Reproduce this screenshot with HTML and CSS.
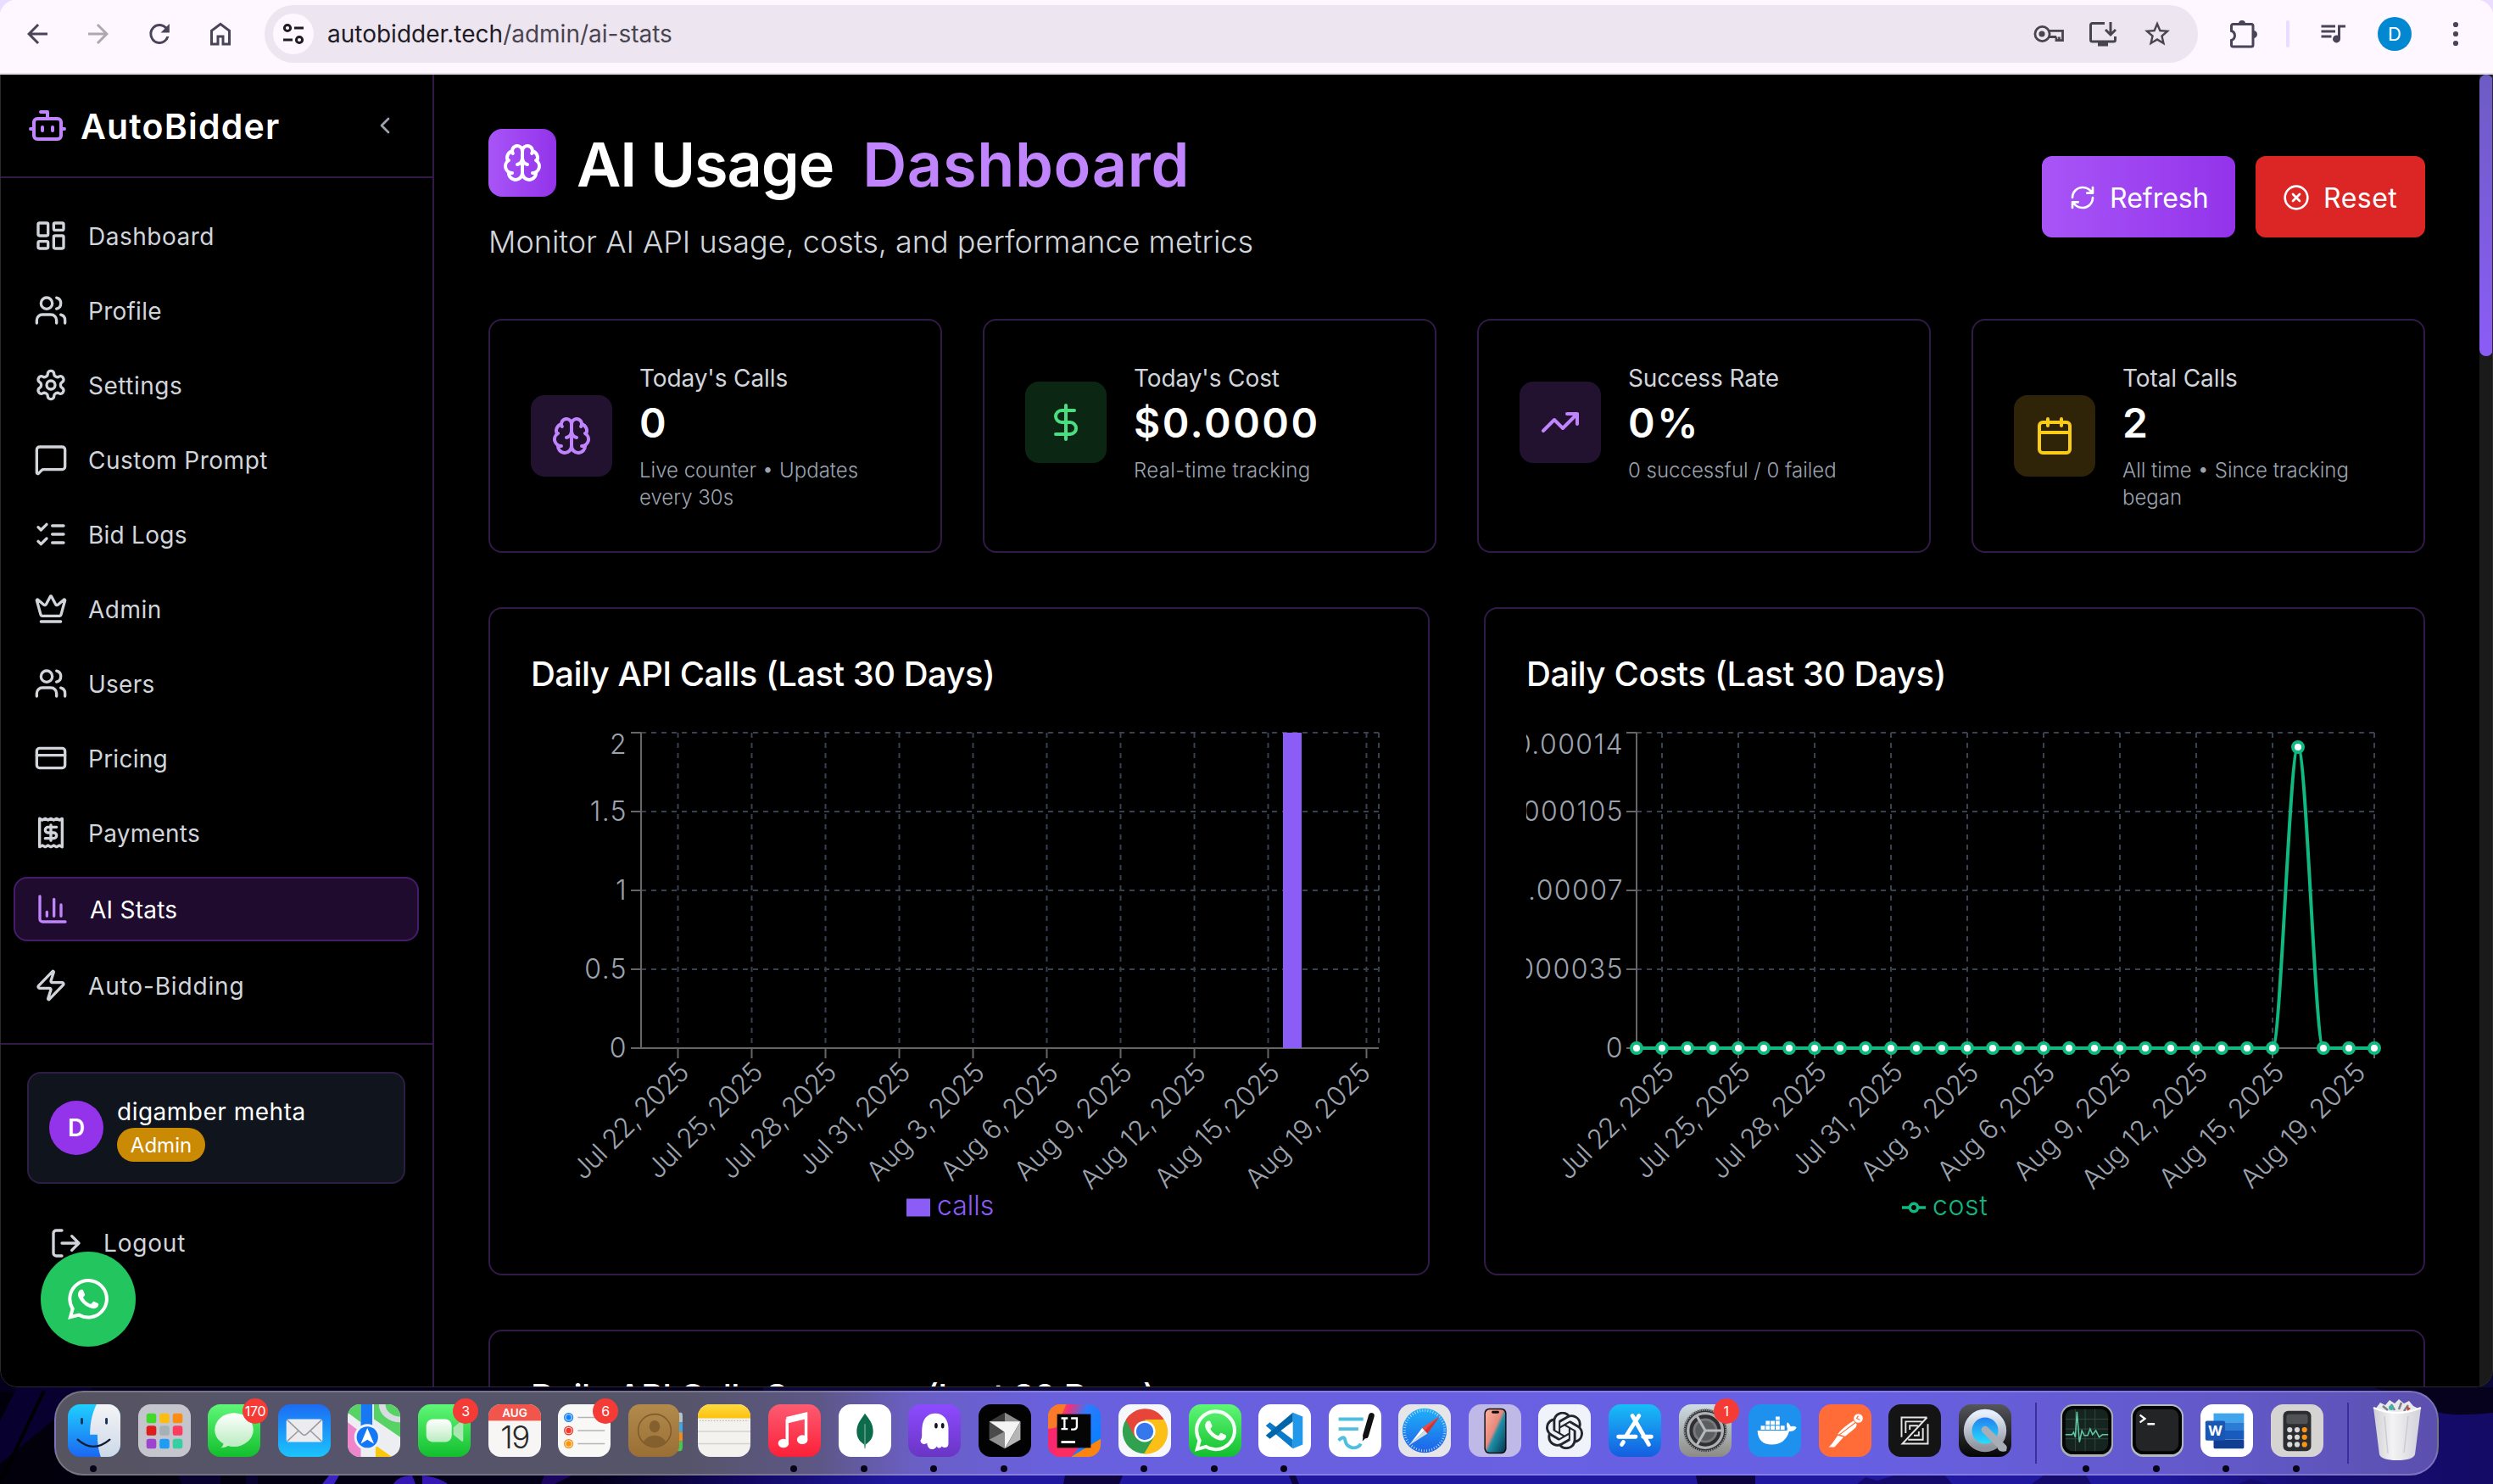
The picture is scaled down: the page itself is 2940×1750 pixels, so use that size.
FILE: index.html
```html
<!DOCTYPE html>
<html lang="en">
<head>
<meta charset="utf-8">
<title>AI Usage Dashboard</title>
<link rel="stylesheet" href="styles.css">
</head>
<body>
<svg width="0" height="0" class="defs">
  <defs>
    <symbol id="brain" viewBox="0 0 24 24"><path d="M12 18V5M15 13a4.17 4.17 0 0 1-3-4 4.17 4.17 0 0 1-3 4M17.598 6.5A3 3 0 1 0 12 5a3 3 0 1 0-5.598 1.5M17.997 5.125a4 4 0 0 1 2.526 5.77M18 18a4 4 0 0 0 2-7.464M19.967 17.483A4 4 0 1 1 12 18a4 4 0 1 1-7.967-.517M6 18a4 4 0 0 1-2-7.464M6.003 5.125a4 4 0 0 0-2.526 5.77"/></symbol>
    <symbol id="users" viewBox="0 0 24 24"><path d="M16 21v-2a4 4 0 0 0-4-4H6a4 4 0 0 0-4 4v2M22 21v-2a4 4 0 0 0-3-3.87M16 3.13a4 4 0 0 1 0 7.75"/><circle cx="9" cy="7" r="4"/></symbol>
    <symbol id="whatsapp" viewBox="0 0 24 24"><path d="M17.472 14.382c-.297-.149-1.758-.867-2.03-.967-.273-.099-.471-.148-.67.15-.197.297-.767.966-.94 1.164-.173.199-.347.223-.644.075-.297-.15-1.255-.463-2.39-1.475-.883-.788-1.48-1.761-1.653-2.059-.173-.297-.018-.458.13-.606.134-.133.298-.347.446-.52.149-.174.198-.298.298-.497.099-.198.05-.371-.025-.52-.075-.149-.669-1.612-.916-2.207-.242-.579-.487-.5-.669-.51-.173-.008-.371-.01-.57-.01-.198 0-.52.074-.792.372-.272.297-1.04 1.016-1.04 2.479 0 1.462 1.065 2.875 1.213 3.074.149.198 2.096 3.2 5.077 4.487.709.306 1.262.489 1.694.625.712.227 1.36.195 1.871.118.571-.085 1.758-.719 2.006-1.413.248-.694.248-1.289.173-1.413-.074-.124-.272-.198-.57-.347m-5.421 7.403h-.004a9.87 9.87 0 01-5.031-1.378l-.361-.214-3.741.982.998-3.648-.235-.374a9.86 9.86 0 01-1.51-5.26c.001-5.45 4.436-9.884 9.888-9.884 2.64 0 5.122 1.03 6.988 2.898a9.825 9.825 0 012.893 6.994c-.003 5.45-4.437 9.884-9.885 9.884m8.413-18.297A11.815 11.815 0 0012.05 0C5.495 0 .16 5.335.157 11.892c0 2.096.547 4.142 1.588 5.945L.057 24l6.305-1.654a11.882 11.882 0 005.683 1.448h.005c6.554 0 11.89-5.335 11.893-11.893a11.821 11.821 0 00-3.48-8.413z"/></symbol>
    <linearGradient id="g-green" x1="0" y1="0" x2="0" y2="1"><stop offset="0" stop-color="#5ff777"/><stop offset="1" stop-color="#12bf2d"/></linearGradient>
    <linearGradient id="g-white" x1="0" y1="0" x2="0" y2="1"><stop offset="0" stop-color="#fff"/><stop offset="1" stop-color="#b9ecc0"/></linearGradient>
    <linearGradient id="g-mail" x1="0" y1="0" x2="0" y2="1"><stop offset="0" stop-color="#1c6cf3"/><stop offset="1" stop-color="#1cc4fd"/></linearGradient>
    <linearGradient id="g-finder" x1="0" y1="0" x2="0" y2="1"><stop offset="0" stop-color="#1fd0ff"/><stop offset="1" stop-color="#1c67f2"/></linearGradient>
    <linearGradient id="g-face" x1="0" y1="0" x2="0" y2="1"><stop offset="0" stop-color="#f4f4f6"/><stop offset="1" stop-color="#cdd9e8"/></linearGradient>
    <linearGradient id="g-music" x1="0" y1="0" x2="0" y2="1"><stop offset="0" stop-color="#fc5c72"/><stop offset="1" stop-color="#fb2038"/></linearGradient>
    <linearGradient id="g-ghost" x1="0" y1="0" x2="0" y2="1"><stop offset="0" stop-color="#8d4bff"/><stop offset="1" stop-color="#6a35c4"/></linearGradient>
    <linearGradient id="g-idea" x1="0" y1=".2" x2="1" y2=".6"><stop offset="0" stop-color="#ff7a1c"/><stop offset=".3" stop-color="#f0307a"/><stop offset=".6" stop-color="#2d7bff"/><stop offset="1" stop-color="#0a80ff"/></linearGradient>
    <linearGradient id="g-store" x1="0" y1="0" x2="0" y2="1"><stop offset="0" stop-color="#19bdf8"/><stop offset="1" stop-color="#145de0"/></linearGradient>
    <linearGradient id="g-sys" x1="0" y1="0" x2="0" y2="1"><stop offset="0" stop-color="#cfdde4"/><stop offset="1" stop-color="#8c8a86"/></linearGradient>
    <linearGradient id="g-qt" x1="0" y1="0" x2="0" y2="1"><stop offset="0" stop-color="#55565c"/><stop offset="1" stop-color="#050506"/></linearGradient>
    <linearGradient id="g-steel" x1="0" y1="0" x2="0" y2="1"><stop offset="0" stop-color="#e6effc"/><stop offset="1" stop-color="#8e939c"/></linearGradient>
    <linearGradient id="g-qtc" x1="0" y1="0" x2="0" y2="1"><stop offset="0" stop-color="#2272ee"/><stop offset="1" stop-color="#27edff"/></linearGradient>
    <linearGradient id="g-saf" x1="0" y1="0" x2="0" y2="1"><stop offset="0" stop-color="#1fb0fa"/><stop offset="1" stop-color="#1d62e6"/></linearGradient>
    <linearGradient id="g-tan" x1="0" y1="0" x2="0" y2="1"><stop offset="0" stop-color="#b28a4c"/><stop offset="1" stop-color="#9a6f36"/></linearGradient>
    <linearGradient id="g-note" x1="0" y1="0" x2="0" y2="1"><stop offset="0" stop-color="#fedb45"/><stop offset="1" stop-color="#fcc10c"/></linearGradient>
    <linearGradient id="g-trash" x1="0" y1="0" x2="1" y2="0"><stop offset="0" stop-color="#cfcfd4"/><stop offset=".4" stop-color="#f3f3f4"/><stop offset="1" stop-color="#d2d0da"/></linearGradient>
    <linearGradient id="g-phone" x1="0" y1="0" x2="1" y2="1"><stop offset="0" stop-color="#ffb09c"/><stop offset=".45" stop-color="#e6897c"/><stop offset=".55" stop-color="#1e8fa8"/><stop offset="1" stop-color="#04364f"/></linearGradient>
    <clipPath id="tile"><rect width="64" height="64" rx="15"/></clipPath>
  </defs>
</svg>

<header class="toolbar">
  <nav class="toolbar-nav">
    <svg class="tb" viewBox="0 0 24 24"><path d="M20 11H7.83l5.59-5.59L12 4l-8 8 8 8 1.41-1.41L7.83 13H20z"/></svg>
    <svg class="tb dim" viewBox="0 0 24 24"><path d="M4 11h12.17l-5.58-5.59L12 4l8 8-8 8-1.41-1.41L16.17 13H4z"/></svg>
    <svg class="tb" viewBox="0 0 24 24"><path d="M17.65 6.35A7.958 7.958 0 0 0 12 4a8 8 0 1 0 7.73 10h-2.08A6 6 0 1 1 12 6c1.66 0 3.14.69 4.22 1.78L13 11h7V4z" transform="matrix(.98 0 0 1 .3 0)"/></svg>
    <svg class="tb" viewBox="0 0 24 24"><path d="M6 19h3v-6h6v6h3v-9l-6-4.5L6 10zm-2 2V9l8-6 8 6v12h-7v-6h-2v6z"/></svg>
  </nav>
  <div class="omnibox">
    <span class="site-info"><svg width="28" height="28" viewBox="0 0 28 28" fill="none" stroke="#1f1b24" stroke-width="3"><circle cx="7" cy="7" r="3.6"/><path d="M15 7h11M2 21h11"/><circle cx="21" cy="21" r="3.6"/></svg></span>
    <span class="url">autobidder.tech<span class="path">/admin/ai-stats</span></span>
    <span class="omni-icons">
      <svg width="36" height="24" viewBox="0 0 36 24" fill="none" stroke="#49454f" stroke-width="2.8"><circle cx="10.5" cy="12" r="8.6"/><circle cx="10" cy="12" r="3.6" fill="#49454f" stroke="none"/><path d="M18 8.4h16.5v11.2h-4V15.5M27 15.5v4h4M18.5 15.5H27"/></svg>
      <svg width="34" height="32" viewBox="0 0 34 32" fill="none" stroke="#49454f" stroke-width="3"><path d="M19 3.500H4.500a2 2 0 0 0-2 2V23a2 2 0 0 0 2 2h25a2 2 0 0 0 2-2v-4M26 2v14M20 11l6 6 6-6"/><path d="M11 28h12" stroke-width="5"/></svg>
      <svg width="36" height="36" viewBox="0 0 24 24" fill="#49454f"><path d="M22 9.240l-7.190-.62L12 2 9.190 8.630 2 9.240l5.460 4.730L5.820 21 12 17.270 18.180 21l-1.630-7.030zM12 15.400l-3.760 2.270 1-4.280-3.320-2.880 4.380-.38L12 6.100l1.710 4.040 4.380.38-3.320 2.880 1 4.280z"/></svg>
    </span>
  </div>
  <div class="toolbar-end">
    <svg width="36" height="36" viewBox="0 0 36 36" fill="none" stroke="#4a4458" stroke-width="3"><path d="M3.500 8.500a2 2 0 0 1 2-2H27a2 2 0 0 1 2 2V31a2 2 0 0 1-2 2H5.500a2 2 0 0 1-2-2v-5.500a5.800 5.800 0 0 0 0-11z"/><path d="M12 6a4 4 0 0 1 8 0zM29.500 14a4.500 4.500 0 0 1 0 9z" fill="#4a4458" stroke="none"/></svg>
    <i class="tb-sep"></i>
    <svg width="36" height="36" viewBox="0 0 24 24" fill="#4a4458"><path d="M14 5H3v2h11zm0 4H3v2h11zM3 15h8v-2H3zM16 5v8.180A3 3 0 1 0 18 16V7h4V5z"/></svg>
    <span class="profile">D</span>
    <svg width="12" height="36" viewBox="0 0 12 36" fill="#4a4458"><circle cx="6" cy="7" r="3.100"/><circle cx="6" cy="18" r="3.100"/><circle cx="6" cy="29" r="3.100"/></svg>
  </div>
</header>

<div class="window">
  <aside class="sidebar">
    <div class="brand">
      <svg class="ic s48 violet" viewBox="0 0 24 24"><path d="M12 8V4H8M2 14h2M20 14h2M15 13v2M9 13v2"/><rect width="16" height="12" x="4" y="8" rx="2"/></svg>
      <span class="brand-name">AutoBidder</span>
      <svg class="ic s32 collapse" viewBox="0 0 24 24"><path d="m15 18-6-6 6-6"/></svg>
    </div>
    <nav class="menu">
      <a class="item"><svg class="ic s40" viewBox="0 0 24 24"><rect width="7" height="9" x="3" y="3" rx="1"/><rect width="7" height="5" x="14" y="3" rx="1"/><rect width="7" height="9" x="14" y="12" rx="1"/><rect width="7" height="5" x="3" y="16" rx="1"/></svg>Dashboard</a>
      <a class="item snug"><svg class="ic s40"><use href="#users"/></svg>Profile</a>
      <a class="item"><svg class="ic s40" viewBox="0 0 24 24"><path d="M12.220 2h-.44a2 2 0 0 0-2 2v.18a2 2 0 0 1-1 1.730l-.43.25a2 2 0 0 1-2 0l-.15-.08a2 2 0 0 0-2.730.73l-.22.38a2 2 0 0 0 .73 2.730l.15.1a2 2 0 0 1 1 1.720v.51a2 2 0 0 1-1 1.740l-.15.09a2 2 0 0 0-.73 2.730l.22.38a2 2 0 0 0 2.730.73l.15-.08a2 2 0 0 1 2 0l.43.25a2 2 0 0 1 1 1.730V20a2 2 0 0 0 2 2h.44a2 2 0 0 0 2-2v-.18a2 2 0 0 1 1-1.730l.43-.25a2 2 0 0 1 2 0l.15.08a2 2 0 0 0 2.730-.73l.22-.39a2 2 0 0 0-.73-2.730l-.15-.08a2 2 0 0 1-1-1.740v-.5a2 2 0 0 1 1-1.740l.15-.09a2 2 0 0 0 .73-2.730l-.22-.38a2 2 0 0 0-2.730-.73l-.15.08a2 2 0 0 1-2 0l-.43-.25a2 2 0 0 1-1-1.730V4a2 2 0 0 0-2-2z"/><circle cx="12" cy="12" r="3"/></svg>Settings</a>
      <a class="item"><svg class="ic s40" viewBox="0 0 24 24"><path d="M22 17a2 2 0 0 1-2 2H6.828a2 2 0 0 0-1.414.586l-2.202 2.202A.71.71 0 0 1 2 21.286V5a2 2 0 0 1 2-2h16a2 2 0 0 1 2 2z"/></svg>Custom Prompt</a>
      <a class="item snug"><svg class="ic s40" viewBox="0 0 24 24"><path d="m3 17 2 2 4-4M3 7l2 2 4-4M13 6h8M13 12h8M13 18h8"/></svg>Bid Logs</a>
      <a class="item"><svg class="ic s40" viewBox="0 0 24 24"><path d="M11.562 3.266a.5.5 0 0 1 .876 0L15.390 8.870a1 1 0 0 0 1.516.294L21.183 5.500a.5.5 0 0 1 .798.519l-2.834 10.246a1 1 0 0 1-.956.734H5.810a1 1 0 0 1-.957-.734L2.020 6.020a.5.5 0 0 1 .798-.519l4.276 3.664a1 1 0 0 0 1.516-.294zM5 21h14"/></svg>Admin</a>
      <a class="item snug"><svg class="ic s40"><use href="#users"/></svg>Users</a>
      <a class="item snug"><svg class="ic s40" viewBox="0 0 24 24"><rect width="20" height="14" x="2" y="5" rx="2"/><path d="M2 10h20"/></svg>Pricing</a>
      <a class="item snug"><svg class="ic s40" viewBox="0 0 24 24"><path d="M4 2v20l2-1 2 1 2-1 2 1 2-1 2 1 2-1 2 1V2l-2 1-2-1-2 1-2-1-2 1-2-1-2 1ZM16 8h-6a2 2 0 1 0 0 4h4a2 2 0 1 1 0 4H8M12 17.500v-11"/></svg>Payments</a>
      <a class="item snug active"><svg class="ic s40 violet" viewBox="0 0 24 24"><path d="M3 3v16a2 2 0 0 0 2 2h16M18 17V9M13 17V5M8 17v-3"/></svg>AI Stats</a>
      <a class="item wide"><svg class="ic s40" viewBox="0 0 24 24"><path d="M4 14a1 1 0 0 1-.78-1.630l9.900-10.200a.5.5 0 0 1 .86.46l-1.920 6.020A1 1 0 0 0 13 10h7a1 1 0 0 1 .78 1.630l-9.900 10.200a.5.5 0 0 1-.86-.46l1.920-6.020A1 1 0 0 0 11 14z"/></svg>Auto-Bidding</a>
    </nav>
    <div class="side-foot">
      <div class="user">
        <span class="avatar">D</span>
        <div><div class="user-name">digamber mehta</div><span class="role">Admin</span></div>
      </div>
      <a class="logout"><svg class="ic s40" viewBox="0 0 24 24"><path d="M9 21H5a2 2 0 0 1-2-2V5a2 2 0 0 1 2-2h4M16 17l5-5-5-5M21 12H9"/></svg>Logout</a>
    </div>
  </aside>

  <main class="main">
    <div class="page-head">
      <div>
        <div class="title-row">
          <span class="title-icon"><svg class="ic s48"><use href="#brain"/></svg></span>
          <h1><span class="t1">AI Usage</span><span class="t2">Dashboard</span></h1>
        </div>
        <p class="subtitle">Monitor AI API usage, costs, and performance metrics</p>
      </div>
      <div class="actions">
        <button class="btn refresh"><svg class="ic s32" viewBox="0 0 24 24"><path d="M3 12a9 9 0 0 1 9-9 9.750 9.750 0 0 1 6.740 2.740L21 8M21 3v5h-5M21 12a9 9 0 0 1-9 9 9.750 9.750 0 0 1-6.740-2.740L3 16M8 16H3v5"/></svg>Refresh</button>
        <button class="btn reset"><svg class="ic s32" viewBox="0 0 24 24"><circle cx="12" cy="12" r="10"/><path d="m15 9-6 6M9 9l6 6"/></svg>Reset</button>
      </div>
    </div>

    <section class="stats">
      <article class="card stat"><div class="stat-in">
        <span class="stat-icon purple"><svg class="ic s48"><use href="#brain"/></svg></span>
        <div><div class="label">Today's Calls</div><div class="value">0</div><div class="note">Live counter • Updates<br>every 30s</div></div>
      </div></article>
      <article class="card stat"><div class="stat-in">
        <span class="stat-icon green"><svg class="ic s48" viewBox="0 0 24 24"><path d="M12 2v20M17 5H9.500a3.500 3.500 0 0 0 0 7h5a3.500 3.500 0 0 1 0 7H6"/></svg></span>
        <div><div class="label">Today's Cost</div><div class="value">$0.0000</div><div class="note loose">Real-time tracking</div></div>
      </div></article>
      <article class="card stat"><div class="stat-in">
        <span class="stat-icon purple"><svg class="ic s48" viewBox="0 0 24 24"><path d="M16 7h6v6M22 7l-8.500 8.500-5-5L2 17"/></svg></span>
        <div><div class="label">Success Rate</div><div class="value">0%</div><div class="note">0 successful / 0 failed</div></div>
      </div></article>
      <article class="card stat"><div class="stat-in">
        <span class="stat-icon yellow"><svg class="ic s48" viewBox="0 0 24 24"><path d="M8 2v4M16 2v4M3 10h18"/><rect width="18" height="18" x="3" y="4" rx="2"/></svg></span>
        <div><div class="label">Total Calls</div><div class="value">2</div><div class="note">All time • Since tracking<br>began</div></div>
      </div></article>
    </section>

    <section class="charts">
      <article class="card panel">
        <h2>Daily API Calls (Last 30 Days)</h2>
        <svg class="chart" width="1010" height="600" viewBox="0 0 1010 600">
          <path class="grid" d="M130 10H1000M130 103H1000M130 196H1000M130 289H1000"/>
          <path class="grid" d="M173.500 10V382M260.500 10V382M347.500 10V382M434.500 10V382M521.500 10V382M608.500 10V382M695.500 10V382M782.500 10V382M869.500 10V382M985.500 10V382M1000 10V382"/>
          <path class="axis" d="M130 10V382M118 10H130M118 103H130M118 196H130M118 289H130M118 382H1000M173.500 382v12M260.500 382v12M347.500 382v12M434.500 382v12M521.500 382v12M608.500 382v12M695.500 382v12M782.500 382v12M869.500 382v12M985.500 382v12"/>
          <rect x="887" y="10" width="22" height="372" fill="#8b5cf6"/>
          <g class="tick ylab"><text x="114" y="35">2</text><text x="114" y="114">1.5</text><text x="114" y="207">1</text><text x="114" y="300">0.5</text><text x="114" y="393">0</text></g>
          <g class="tick">
            <text class="jul" transform="translate(188 413) rotate(-45)">Jul 22, 2025</text>
            <text class="jul" transform="translate(275 413) rotate(-45)">Jul 25, 2025</text>
            <text class="jul" transform="translate(362 413) rotate(-45)">Jul 28, 2025</text>
            <text class="jul" transform="translate(449 413) rotate(-45)">Jul 31, 2025</text>
            <text class="aug" transform="translate(537 413) rotate(-45)">Aug 3, 2025</text>
            <text class="aug" transform="translate(624 413) rotate(-45)">Aug 6, 2025</text>
            <text class="aug" transform="translate(711 413) rotate(-45)">Aug 9, 2025</text>
            <text class="aug" transform="translate(798 413) rotate(-45)">Aug 12, 2025</text>
            <text class="aug" transform="translate(885 413) rotate(-45)">Aug 15, 2025</text>
            <text class="aug" transform="translate(992 413) rotate(-45)">Aug 19, 2025</text>
          </g>
          <rect x="443" y="559.500" width="28" height="21" fill="#8b5cf6"/>
          <text class="legend" x="479" y="579" fill="#8b5cf6">calls</text>
        </svg>
      </article>
      <article class="card panel">
        <h2 class="costs">Daily Costs (Last 30 Days)</h2>
        <svg class="chart" width="1010" height="600" viewBox="0 0 1010 600">
          <defs><marker id="dot" viewBox="0 0 20 20" refX="10" refY="10" markerWidth="20" markerHeight="20" markerUnits="userSpaceOnUse"><circle cx="10" cy="10" r="6" fill="#fff" stroke="#10b981" stroke-width="4"/></marker></defs>
          <path class="grid" d="M130 10H1000M130 103H1000M130 196H1000M130 289H1000"/>
          <path class="grid" d="M160 10V382M250 10V382M340 10V382M430 10V382M520 10V382M610 10V382M700 10V382M790 10V382M880 10V382M1000 10V382"/>
          <path class="axis" d="M130 10V382M118 10H130M118 103H130M118 196H130M118 289H130M118 382H1000M160 382v12M250 382v12M340 382v12M430 382v12M520 382v12M610 382v12M700 382v12M790 382v12M880 382v12M1000 382v12"/>
          <path class="line" marker-start="url(#dot)" marker-mid="url(#dot)" marker-end="url(#dot)" d="M130 382h30h30h30h30h30h30h30h30h30h30h30h30h30h30h30h30h30h30h30h30h30h30h30h30h30C890 382 900 27 910 27C920 27 930 382 940 382h30h30"/>
          <g class="tick ylab"><text x="115" y="35">0.00014</text><text x="115" y="114">0.000105</text><text x="115" y="207">0.00007</text><text x="115" y="300">0.000035</text><text x="115" y="393">0</text></g>
          <g class="tick">
            <text class="jul" transform="translate(175.500 413) rotate(-45)">Jul 22, 2025</text>
            <text class="jul" transform="translate(265.500 413) rotate(-45)">Jul 25, 2025</text>
            <text class="jul" transform="translate(355.500 413) rotate(-45)">Jul 28, 2025</text>
            <text class="jul" transform="translate(445.500 413) rotate(-45)">Jul 31, 2025</text>
            <text class="aug" transform="translate(535.500 413) rotate(-45)">Aug 3, 2025</text>
            <text class="aug" transform="translate(625.500 413) rotate(-45)">Aug 6, 2025</text>
            <text class="aug" transform="translate(715.500 413) rotate(-45)">Aug 9, 2025</text>
            <text class="aug" transform="translate(805.500 413) rotate(-45)">Aug 12, 2025</text>
            <text class="aug" transform="translate(895.500 413) rotate(-45)">Aug 15, 2025</text>
            <text class="aug" transform="translate(991.500 413) rotate(-45)">Aug 19, 2025</text>
          </g>
          <g stroke="#10b981" stroke-width="3.500" fill="none"><path d="M443 570h9.300M461.700 570H471"/><circle cx="457" cy="570" r="4.670"/></g>
          <text class="legend cost" x="479" y="579" fill="#10b981">cost</text>
        </svg>
      </article>
    </section>

    <section class="card panel summary"><h2>Daily API Calls Summary (Last 30 Days)</h2></section>
  </main>
  <div class="scroll"><i></i></div>
  <a class="fab"><svg width="48" height="48" fill="#fff"><use href="#whatsapp"/></svg></a>
</div>

<footer class="desktop">
  <svg class="wallpaper" width="2940" height="134" viewBox="0 0 2940 134" preserveAspectRatio="none">
    <defs><linearGradient id="wp" x1="0" x2="1" y1="0" y2="0"><stop offset="0" stop-color="#01000a"/><stop offset=".24" stop-color="#04001c"/><stop offset=".3" stop-color="#120862"/><stop offset=".36" stop-color="#2019a0"/><stop offset=".86" stop-color="#2019a0"/><stop offset=".93" stop-color="#150c72"/><stop offset="1" stop-color="#140b66"/></linearGradient></defs>
    <rect width="2940" height="134" fill="url(#wp)"/>
    <rect width="2940" height="26" fill="#0b0736"/>
    <rect width="900" height="26" fill="#04001c"/>
    <path d="M20 20L110 20 0 110V60z" fill="#08002e"/>
    <path d="M0 132L52 24" stroke="#000" stroke-width="4"/>
    <path d="M210 124h50v10h-46zM290 124h14v10h-14z" fill="#08022f"/>
    <path d="M388 124h12l-6 10h-14z" fill="#3a22c4"/>
    <path d="M464 134q6-10 22-10l4 10zM498 124q20 2 30 10h-30z" fill="#3517b4"/>
    <path d="M642 124h32l-20 10h-16z" fill="#1c0560"/>
    <path d="M1256 124h68l-4 10h-66zM1520 124h8l4 10h-8z" fill="#0c0340"/>
    <path d="M2000 124h70v10h-68z" fill="#0c0340"/>
    <path d="M2190 134l10-8 14 4 20-6h60l8 10zM2410 124h50l6 10h-70zM2640 134l14-6 20 6z" fill="#140b6c"/>
    <path d="M2800 20h140v30q-60 6-70-4z" fill="#06021e"/>
  </svg>
  <div class="dock">
    <div class="apps">
      <div class="app on"><svg viewBox="0 0 64 64"><g clip-path="url(#tile)"><rect width="64" height="64" fill="url(#g-finder)"/><path d="M35 0C29 12 27 24 27 37h9c0 10 1 18 4 27h24V0z" fill="url(#g-face)"/></g><path d="M17 18v5M47 18v5" stroke="#16315a" stroke-width="3" stroke-linecap="round"/><path d="M12 43q19 17 39 0" fill="none" stroke="#101c30" stroke-width="2.400" stroke-linecap="round"/></svg></div>
      <div class="app"><svg viewBox="0 0 64 64"><rect width="64" height="64" rx="15" fill="#c5c6cd"/><g><rect x="10" y="11" width="12" height="12" rx="3" fill="#43d92c"/><rect x="26" y="11" width="12" height="12" rx="3" fill="#fbbd12"/><rect x="42" y="11" width="12" height="12" rx="3" fill="#fb8c14"/><rect x="10" y="26" width="12" height="12" rx="3" fill="#dc1f1c"/><rect x="26" y="26" width="12" height="12" rx="3" fill="#a6b1b6"/><rect x="42" y="26" width="12" height="12" rx="3" fill="#fc3d61"/><rect x="10" y="42" width="12" height="12" rx="3" fill="#9c43cf"/><rect x="26" y="42" width="12" height="12" rx="3" fill="#1f9cf6"/><rect x="42" y="42" width="12" height="12" rx="3" fill="#37cfa2"/></g></svg></div>
      <div class="app"><svg viewBox="0 0 64 64"><rect width="64" height="64" rx="15" fill="url(#g-green)"/><ellipse cx="32" cy="31" rx="23.500" ry="20.500" fill="url(#g-white)"/><path d="M19 45q1 5-3 8 7 0 11-5z" fill="#c5f0cb"/></svg><b class="badge">170</b></div>
      <div class="app"><svg viewBox="0 0 64 64"><rect width="64" height="64" rx="15" fill="url(#g-mail)"/><rect x="10" y="18" width="44" height="28" rx="3" fill="#ececee"/><path d="M11 19l18 17q3 3 6 0l18-17M11 45l14-13M53 45L39 32" fill="none" stroke="#9a9ca4" stroke-width="1.600"/></svg></div>
      <div class="app"><svg viewBox="0 0 64 64"><g clip-path="url(#tile)"><rect width="64" height="64" fill="#eceef2"/><path d="M0 0h16v22L0 10zM32 0h32v40L32 18z" fill="#56d364"/><path d="M0 22l16 12v30H0z" fill="#ef86cc"/><path d="M34 64V50l20 14z" fill="#fdc70a"/><path d="M38 0a26 22 0 0 0 26 22V15A18 15 0 0 1 46 0z" fill="#d9dbe2"/><rect x="16" width="14" height="40" fill="#1878f2"/></g><circle cx="24" cy="40" r="16" fill="#eef2fa"/><circle cx="24" cy="40" r="13" fill="#1478f6"/><path d="M24 29l8 19-8-5-8 5z" fill="#fff"/></svg></div>
      <div class="app"><svg viewBox="0 0 64 64"><rect width="64" height="64" rx="15" fill="url(#g-green)"/><rect x="10" y="18" width="31" height="28" rx="8" fill="url(#g-white)"/><path d="M43 28l10-8q2 0 2 2v21q0 3-2 2l-10-8z" fill="#a9e6b2"/></svg><b class="badge">3</b></div>
      <div class="app"><svg viewBox="0 0 64 64"><g clip-path="url(#tile)"><rect width="64" height="64" fill="#f7f6f4"/><rect width="64" height="20" fill="#f2554c"/></g><text x="32" y="15.500" class="cal-m">AUG</text><text x="32" y="54" class="cal-d">19</text></svg></div>
      <div class="app"><svg viewBox="0 0 64 64"><rect width="64" height="64" rx="15" fill="#f8f8f7"/><g fill="none" stroke-width="1.500"><circle cx="13" cy="16" r="5" stroke="#1180f8"/><circle cx="13" cy="32" r="5" stroke="#f03a30"/><circle cx="13" cy="48" r="5" stroke="#f79410"/></g><circle cx="13" cy="16" r="3.300" fill="#1180f8"/><circle cx="13" cy="32" r="3.300" fill="#f03a30"/><circle cx="13" cy="48" r="3.300" fill="#f79410"/><path d="M24 16h33M24 32h33M24 48h33" stroke="#b4b4b6" stroke-width="1.600"/></svg><b class="badge">6</b></div>
      <div class="app"><svg viewBox="0 0 64 64"><path d="M58 10h6q2 0 2 4v8h-8z" fill="#b8c4c6"/><path d="M58 22h8v12h-8z" fill="#3fa8e8"/><path d="M58 34h8v11h-8z" fill="#f28d1b"/><path d="M58 45h8v7q0 5-4 5h-4z" fill="#47c853"/><rect width="62" height="64" rx="14" fill="url(#g-tan)"/><circle cx="32" cy="32" r="20" fill="none" stroke="#7f5a2c" stroke-width="1.600"/><ellipse cx="32" cy="27" rx="6.500" ry="7.500" fill="#84602f"/><path d="M18 46q5-8 14-8t14 8q-6 6-14 6t-14-6z" fill="#84602f"/></svg></div>
      <div class="app"><svg viewBox="0 0 64 64"><g clip-path="url(#tile)"><rect width="64" height="64" fill="#f3f2ee"/><rect width="64" height="17" fill="url(#g-note)"/><path d="M0 33h64M0 48h64" stroke="#d3d2ce" stroke-width="1.500"/><path d="M2 20h60" stroke="#b9b8b2" stroke-width="1.500" stroke-dasharray="1.500 2"/></g></svg></div>
      <div class="app on"><svg viewBox="0 0 64 64"><rect width="64" height="64" rx="15" fill="url(#g-music)"/><path d="M23 18l23-6v30M23 18v28" fill="none" stroke="#fff" stroke-width="3.600"/><path d="M22 15.500l25-6v8l-25 6z" fill="#fff"/><ellipse cx="18.500" cy="47.500" rx="6.500" ry="5.500" fill="#fff"/><ellipse cx="41.500" cy="43" rx="6.500" ry="5.500" fill="#fff"/></svg></div>
      <div class="app on"><svg viewBox="0 0 64 64"><rect width="64" height="64" rx="15" fill="#fff"/><path d="M32 11c5 7 10 12 10 22 0 9-5 13-9 16l-1 5-1-5c-4-3-9-7-9-16 0-10 6-15 10-22z" fill="#0b6b4b"/><path d="M32 24v30" stroke="#7fb39d" stroke-width="1.200"/></svg></div>
      <div class="app on"><svg viewBox="0 0 64 64"><rect width="64" height="64" rx="15" fill="url(#g-ghost)"/><path d="M33 11c10 0 16 8 16 18v19c0 5-5 6-8 3-2 3-5 3-6 0-2 3-6 5-9 3-1-1-3-3-3-7-3 3-8 1-8-3 3-5 1-9 2-16 1-11 7-17 16-17z" fill="#fff"/><ellipse cx="34" cy="26" rx="1.900" ry="3.300" fill="#17121f"/><ellipse cx="42" cy="26" rx="1.900" ry="3.300" fill="#17121f"/></svg></div>
      <div class="app on"><svg viewBox="0 0 64 64"><rect width="64" height="64" rx="15" fill="#020202"/><path d="M13 21L32 10v16z" fill="#3a3a3a"/><path d="M32 10l19 11-19 4z" fill="#8b8b8b"/><path d="M13 21l19 5v28L13 43z" fill="#4a4a4a"/><path d="M13 43l19-10v21z" fill="#909090"/><path d="M13 21h38L32 54V34z" fill="#f4f4f4"/><path d="M51 21v22L32 54z" fill="#b5b5b5"/></svg></div>
      <div class="app"><svg viewBox="0 0 64 64"><g clip-path="url(#tile)"><rect width="64" height="64" fill="url(#g-idea)"/><path d="M0 0h22L0 50z" fill="#fa7a2a"/><path d="M0 30l12-2v36H0z" fill="#f8286e"/><path d="M10 50h30L28 64H6z" fill="#fc2d63"/><path d="M64 42L28 64h36z" fill="#fd8410"/></g><rect x="11" y="12" width="41" height="41" fill="#050505"/><path d="M16 17h8M20 17v13M16 30h8M28 17h7v9.500q0 4-4 4h-3" stroke="#fff" stroke-width="2.400" fill="none"/><path d="M16 46h17" stroke="#fff" stroke-width="3"/></svg></div>
      <div class="app on"><svg viewBox="0 0 64 64"><rect width="64" height="64" rx="15" fill="#f6f7fa"/><circle cx="32" cy="33" r="27" fill="#2fa14f"/><path d="M9 19A27 27 0 0 1 55.500 18.500H32L20 40z" fill="#e8453a"/><path d="M32 18.500h23.500A27 27 0 0 1 31 60.500L44.500 38z" fill="#fbbf18"/><circle cx="32" cy="33" r="13" fill="#fff"/><circle cx="32" cy="33" r="10.500" fill="#3478ec"/></svg></div>
      <div class="app on"><svg viewBox="0 0 64 64"><rect width="64" height="64" rx="15" fill="url(#g-green)"/><svg x="7" y="6" width="51" height="52" fill="#f6fff7"><use href="#whatsapp"/></svg></svg></div>
      <div class="app on"><svg viewBox="0 0 64 64"><rect width="64" height="64" rx="15" fill="#fff"/><path d="M42 10l12 5v34l-12 5z" fill="#2298ea"/><path d="M42 54L9 26l5-4 28 21z" fill="#0a7bcb"/><path d="M42 10L9 38l5 4 28-21z" fill="#0065a9"/></svg></div>
      <div class="app"><svg viewBox="0 0 64 64"><rect width="64" height="64" rx="15" fill="#fff"/><path d="M12 18h30M12 30h24" stroke="#4fbfe0" stroke-width="4"/><path d="M12 44q7-7 8 0t9 9q8 0 10-5" fill="none" stroke="#4fbfe0" stroke-width="4"/><path d="M52 14L45 38" stroke="#111" stroke-width="7" stroke-linecap="round"/><path d="M41 45l1-7 5 1z" fill="#111"/></svg></div>
      <div class="app"><svg viewBox="0 0 64 64"><rect width="64" height="64" rx="15" fill="#e6e6e8"/><circle cx="32" cy="32" r="27" fill="url(#g-saf)"/><circle cx="32" cy="32" r="24.500" fill="none" stroke="#cfe6fb" stroke-width="3" stroke-dasharray=".8 2.400"/><path d="M51 14L29 29l3 3z" fill="#ff4139"/><path d="M51 14L32 32l3.500 3.500z" fill="#d6302b"/><path d="M13 50L29 29l3 3z" fill="#fff"/><path d="M13 50l19-18 3.500 3.500z" fill="#d7dadf"/></svg></div>
      <div class="app"><svg viewBox="0 0 64 64"><rect width="64" height="64" rx="15" fill="#beb9e6"/><rect x="19" y="5" width="27" height="55" rx="6" fill="#0d0e12"/><rect x="20.500" y="6.500" width="24" height="52" rx="5" fill="url(#g-phone)"/><rect x="28" y="8" width="9" height="3" rx="1.500" fill="#0d0e12"/></svg></div>
      <div class="app"><svg viewBox="0 0 64 64"><rect width="64" height="64" rx="15" fill="#f0f3f9"/><svg x="9" y="9" width="46" height="46" viewBox="0 0 24 24"><path fill="#23262b" d="M22.282 9.821a5.985 5.985 0 0 0-.516-4.910 6.046 6.046 0 0 0-6.510-2.900A6.065 6.065 0 0 0 4.981 4.182a5.985 5.985 0 0 0-3.998 2.900 6.046 6.046 0 0 0 .743 7.097 5.980 5.980 0 0 0 .511 4.911 6.051 6.051 0 0 0 6.515 2.900A5.985 5.985 0 0 0 13.260 24a6.056 6.056 0 0 0 5.772-4.206 5.990 5.990 0 0 0 3.998-2.900 6.056 6.056 0 0 0-.748-7.073zM13.260 22.430a4.476 4.476 0 0 1-2.876-1.041l.142-.080 4.778-2.758a.795.795 0 0 0 .393-.681v-6.737l2.020 1.169a.071.071 0 0 1 .038.052v5.583a4.504 4.504 0 0 1-4.495 4.494zM3.600 18.304a4.471 4.471 0 0 1-.535-3.014l.142.085 4.783 2.758a.771.771 0 0 0 .781 0l5.843-3.369v2.332a.080.080 0 0 1-.033.062L9.740 19.950a4.499 4.499 0 0 1-6.141-1.646zM2.341 7.896a4.485 4.485 0 0 1 2.366-1.973V11.600a.766.766 0 0 0 .388.677l5.814 3.354-2.020 1.169a.076.076 0 0 1-.071 0l-4.830-2.787A4.504 4.504 0 0 1 2.341 7.872zm16.596 3.856L13.104 8.364 15.119 7.200a.076.076 0 0 1 .071 0l4.830 2.791a4.494 4.494 0 0 1-.677 8.104v-5.677a.790.790 0 0 0-.407-.667zm2.011-3.023l-.142-.085-4.774-2.782a.776.776 0 0 0-.785 0L9.409 9.230V6.897a.066.066 0 0 1 .028-.062l4.830-2.787a4.499 4.499 0 0 1 6.680 4.660zM8.307 12.863l-2.020-1.164a.080.080 0 0 1-.038-.057V6.074a4.499 4.499 0 0 1 7.376-3.454l-.142.081L8.704 5.459a.795.795 0 0 0-.393.681zm1.098-2.365l2.602-1.500 2.607 1.500v2.999l-2.597 1.500-2.607-1.500z"/></svg></svg></div>
      <div class="app"><svg viewBox="0 0 64 64"><rect width="64" height="64" rx="15" fill="url(#g-store)"/><g stroke="#fff" stroke-width="5" stroke-linecap="round"><path d="M37 14L21 39M18 46l-2 3M29 14l20 35M12 39.500h21M42 39.500h10"/></g></svg></div>
      <div class="app"><svg viewBox="0 0 64 64"><rect width="64" height="64" rx="15" fill="url(#g-sys)"/><circle cx="32" cy="32" r="26" fill="#2d2f31"/><circle cx="32" cy="32" r="25.500" fill="none" stroke="#8d9092" stroke-width="3" stroke-dasharray="1.600 1.200"/><circle cx="32" cy="32" r="21" fill="none" stroke="#aeb1b3" stroke-width="3.500"/><circle cx="32" cy="32" r="13.500" fill="#5b5e60" stroke="#77797b" stroke-width="3"/><path d="M32 32H52M32 32L22 14.700M32 32L22 49.300" stroke="#b6b9bb" stroke-width="3.200"/></svg><b class="badge">1</b></div>
      <div class="app"><svg viewBox="0 0 64 64"><rect width="64" height="64" rx="15" fill="#1e90ee"/><path d="M11 32h36q1-3-.5-5-1-3 1-5 3 2 4 5 4-1 7 1-2 5-9 5-5 16-21 16-17 0-17.500-17z" fill="#fff"/><g fill="#fff"><path d="M15 26h5v5h-5zM21 26h5v5h-5zM27 26h5v5h-5zM33 26h5v5h-5zM39 26h5v5h-5zM21 20h5v5h-5zM27 20h5v5h-5zM33 20h5v5h-5zM33 15h5v4h-5z"/></g></svg></div>
      <div class="app"><svg viewBox="0 0 64 64"><rect width="64" height="64" rx="15" fill="#ff6c37"/><circle cx="48" cy="17" r="5.500" fill="#fff"/><path d="M42 20l4 4q0 4-3 6l-11 9-9-3q6-8 19-16z" fill="#fff"/><path d="M23 38l7 2-11 12h-7l4-4z" fill="#fff"/><path d="M45 22L25 37M48 14l-2 3 4 2" stroke="#ff6c37" stroke-width="1.200" fill="none"/></svg></div>
      <div class="app"><svg viewBox="0 0 64 64"><rect width="64" height="64" rx="15" fill="#141414"/><path d="M47 16H16v24M47 16L17 48h31V24M41 21H21v14M24 43h18V29M36 26h-10v5M31 38h6v-5" fill="none" stroke="#e4e4e4" stroke-width="2"/></svg></div>
      <div class="app"><svg viewBox="0 0 64 64"><rect width="64" height="64" rx="15" fill="url(#g-qt)"/><circle cx="32" cy="32" r="21" fill="url(#g-qtc)" stroke="url(#g-steel)" stroke-width="10"/><path d="M32 31l22 22" stroke="#a9aeb6" stroke-width="9" stroke-linecap="round"/><path d="M47 54l7-7 4 4v6H50z" fill="#a9aeb6"/></svg></div>
    </div>
    <i class="dock-sep"></i>
    <div class="apps">
      <div class="app on"><svg viewBox="0 0 64 64"><rect width="64" height="64" rx="15" fill="#a9b3b5"/><rect x="2" y="2" width="60" height="59" rx="13" fill="#050505"/><rect x="6" y="6" width="52" height="51" rx="9" fill="#16241f"/><path d="M6 18h52M6 30h52M6 42h52M18 6v51M30 6v51M42 6v51" stroke="#2c4a3f" stroke-width="1"/><path d="M6 37h8l2-3 2 6 2-31 3 37 3-14 3 6h4l3-8 3 7 4-5 4 8 4-3h7" fill="none" stroke="#5fc7a6" stroke-width="1.600"/></svg></div>
      <div class="app on"><svg viewBox="0 0 64 64"><rect width="64" height="64" rx="15" fill="#b3bdc0"/><rect x="2" y="2" width="60" height="59" rx="13" fill="#030303"/><rect x="6" y="6" width="52" height="51" rx="9" fill="#232426"/><path d="M11 13l6 4.500-6 4.500M20 24h9" stroke="#fff" stroke-width="2.400" fill="none"/></svg></div>
      <div class="app on"><svg viewBox="0 0 64 64"><rect width="64" height="64" rx="15" fill="#fff"/><rect x="16" y="11" width="37" height="11" fill="#41a5ee"/><rect x="16" y="22" width="37" height="10" fill="#2b7cd3"/><rect x="16" y="32" width="37" height="11" fill="#185abd"/><rect x="16" y="43" width="37" height="11" rx="1.500" fill="#103f91"/><rect x="6" y="20" width="24" height="24" rx="2" fill="#1a56b4"/><text x="18" y="38.500" class="word-w">W</text></svg></div>
      <div class="app on"><svg viewBox="0 0 64 64"><rect width="64" height="64" rx="15" fill="#d5d4d3"/><rect x="15" y="8" width="34" height="49" rx="6" fill="#2c2d30"/><rect x="19" y="12" width="26" height="12" rx="3" fill="#505256"/><g fill="#d9d9da"><circle cx="23" cy="31" r="3.200"/><circle cx="32" cy="31" r="3.200"/><circle cx="23" cy="40" r="3.200"/><circle cx="32" cy="40" r="3.200"/><circle cx="23" cy="49" r="3.200"/><circle cx="32" cy="49" r="3.200"/></g><g fill="#fc9412"><circle cx="41" cy="31" r="3.200"/><circle cx="41" cy="40" r="3.200"/><circle cx="41" cy="49" r="3.200"/></g></svg></div>
    </div>
    <i class="dock-sep"></i>
    <svg class="trash" width="58" height="76" viewBox="0 0 58 76"><path d="M3 14l6-8 6 3 5-6 6 4 5-5 6 5 6-3 5 6 6 3-3 8H6z" fill="#e9e9ec"/><path d="M12 10l6 5M22 8l4 7M34 6l-3 8M42 9l-5 7" stroke="#7c8189" stroke-width="2.500"/><circle cx="22" cy="12" r="3" fill="#3bb5a8"/><path d="M40 10l5 3-4 3z" fill="#c8402f"/><path d="M1 12q28 12 56 0l-7 55q-2 7-21 7T8 67z" fill="url(#g-trash)"/><path d="M1 12q28 12 56 0" fill="none" stroke="#fff" stroke-width="2"/><path d="M14 22l4 44M42 22l-5 43" stroke="#bdbdc6" stroke-width="1.500" opacity=".6"/></svg>
  </div>
</footer>
</body>
</html>
```
FILE: styles.css
```css
* { box-sizing: border-box; }

body {
  margin: 0;
  width: 2940px;
  height: 1750px;
  overflow: hidden;
  display: flex;
  flex-direction: column;
  background: #03001a;
  color: #fff;
  font-family: Inter, sans-serif;
}

h1, h2, p { margin: 0; }
.defs { position: absolute; }

/* Browser toolbar */
.toolbar {
  flex: none;
  height: 88px;
  display: flex;
  align-items: center;
  padding: 0 38px 6px 26px;
  background: radial-gradient(circle at 20px 20px, #fef7ff 20px, transparent 21px) 0 0 / 20px 20px no-repeat,
    radial-gradient(circle at 0 20px, #fef7ff 20px, transparent 21px) 100% 0 / 20px 20px no-repeat,
    linear-gradient(#fef7ff, #fef7ff) 20px 0 / 2900px 20px no-repeat,
    linear-gradient(#fef7ff, #fef7ff) 0 20px / 100% 68px no-repeat,
    #eaddff;
  border-bottom: 2px solid #e8dfe9;
}
.toolbar-nav { display: flex; gap: 36px; width: 286px; }
.tb { width: 36px; height: 36px; fill: #4a4458; }
.tb.dim { fill: #b0a7b1; }
.omnibox {
  width: 2280px;
  height: 68px;
  display: flex;
  align-items: center;
  padding: 0 30px 0 10px;
  border-radius: 34px;
  background: #ede6f0;
}
.site-info {
  width: 48px;
  height: 48px;
  display: grid;
  place-items: center;
  border-radius: 50%;
  background: #fef7ff;
}
.url { margin-left: 16px; font-size: 28px; color: #1f1b24; }
.url .path { color: #49454f; }
.omni-icons { margin-left: auto; display: flex; align-items: center; gap: 29px; }
.toolbar-end { flex: 1; display: flex; align-items: center; padding-left: 36px; }
.tb-sep { width: 4px; height: 32px; margin: 0 33px 0 32px; border-radius: 2px; background: #eaddff; }
.profile {
  width: 40px;
  height: 40px;
  margin: 0 46px 0 35px;
  display: grid;
  place-items: center;
  border-radius: 50%;
  background: #0288d1;
  font-size: 22px;
}

/* Window */
.window {
  position: relative;
  flex: none;
  height: 1548px;
  display: flex;
  overflow: hidden;
  background: #000;
  border-radius: 0 0 20px 20px;
}
.window::after {
  content: "";
  position: absolute;
  inset: -4px 0 0;
  border: 1px solid #2b2b2b;
  border-radius: 0 0 20px 20px;
}

.ic {
  flex: none;
  fill: none;
  stroke: currentColor;
  stroke-width: 2;
  stroke-linecap: round;
  stroke-linejoin: round;
}
.s32 { width: 32px; height: 32px; }
.s40 { width: 40px; height: 40px; }
.s48 { width: 48px; height: 48px; }
.violet { color: #c084fc; }

/* Sidebar */
.sidebar {
  flex: none;
  width: 512px;
  display: flex;
  flex-direction: column;
  border-right: 2px solid #321a48;
}
.brand {
  height: 122px;
  display: flex;
  align-items: center;
  padding: 0 40px 0 32px;
  border-bottom: 2px solid #321a48;
}
.brand-name { margin: 2px 0 0 15px; font-size: 41px; font-weight: 600; letter-spacing: 1.2px; }
.collapse { margin-left: auto; color: #9ca3af; }
.menu { flex: 1; display: flex; flex-direction: column; gap: 16px; padding: 32px 16px; }
.item {
  height: 72px;
  display: flex;
  align-items: center;
  gap: 24px;
  padding: 0 24px;
  border-radius: 16px;
  color: #d1d5db;
  font-size: 28px;
  line-height: 38px;
  letter-spacing: .5px;
  padding-top: 1px;
}
.item.snug { letter-spacing: .25px; }
.item.wide { letter-spacing: .85px; }
.item > svg { margin-top: -1px; }
.item.active {
  height: 76px;
  border: 2px solid #461d6b;
  background: #1e0b2e;
  color: #fff;
}
.side-foot { height: 406px; padding: 32px; border-top: 2px solid #321a48; }
.user {
  height: 132px;
  display: flex;
  align-items: center;
  gap: 16px;
  padding: 0 24px;
  border: 2px solid #2e1d45;
  border-radius: 16px;
  background: #10141c;
}
.avatar {
  width: 64px;
  height: 64px;
  display: grid;
  place-items: center;
  border-radius: 50%;
  background: #9333ea;
  font-size: 28px;
  font-weight: 600;
}
.user-name { padding-top: 2px; line-height: 38px; font-size: 28px; font-weight: 400; letter-spacing: .5px; }
.role {
  display: block;
  width: 104px;
  height: 40px;
  border-radius: 20px;
  background: #ca8a04;
  font-size: 24px;
  line-height: 42px;
  text-align: center;
}
.logout {
  height: 76px;
  margin-top: 32px;
  display: flex;
  align-items: center;
  gap: 24px;
  padding-left: 26px;
  color: #d1d5db;
  font-size: 28px;
  letter-spacing: .8px;
}
.fab {
  position: absolute;
  left: 48px;
  top: 1388px;
  width: 112px;
  height: 112px;
  display: grid;
  place-items: center;
  border-radius: 50%;
  background: #22c55e;
}

/* Page */
.main { flex: 1; min-width: 0; padding: 64px; }
.page-head { display: flex; justify-content: space-between; align-items: center; height: 160px; }
.title-row { display: flex; align-items: center; gap: 24px; height: 80px; }
.title-icon {
  width: 80px;
  height: 80px;
  display: grid;
  place-items: center;
  border-radius: 16px;
  background: linear-gradient(90deg, #a855f7, #9333ea);
}
h1 { display: flex; gap: 34px; padding-top: 4px; font-size: 72px; font-weight: 600; line-height: 80px; }
.t1 { letter-spacing: -1.1px; }
.t2 { letter-spacing: .7px; color: #c084fc; }
.subtitle { margin-top: 24px; padding-top: 2px; font-size: 36px; font-weight: 300; line-height: 54px; color: #d1d5db; }
.actions { display: flex; gap: 24px; }
.btn {
  height: 96px;
  display: flex;
  align-items: center;
  gap: 16px;
  padding: 2px 32px 0;
  border: 0;
  border-radius: 12px;
  color: #fff;
  font: 400 32px Inter, sans-serif;
}
.refresh { width: 228px; background: linear-gradient(90deg, #a855f7, #9333ea); }
.reset { width: 200px; background: #dc2626; letter-spacing: .5px; }

.card { border: 2px solid #321a48; border-radius: 16px; background: #000; }
.stats { display: grid; grid-template-columns: repeat(4, 1fr); gap: 48px; margin-top: 64px; }
.stat { height: 276px; padding: 48px; }
.stat-in { display: flex; align-items: center; gap: 32px; }
.stat-icon {
  flex: none;
  width: 96px;
  height: 96px;
  display: grid;
  place-items: center;
  border-radius: 16px;
}
.purple { background: #221230; color: #c084fc; }
.green { background: #0c2614; color: #4ade80; }
.yellow { background: #2f2408; color: #facc15; }
.label { padding-top: 1px; font-size: 28px; line-height: 39px; letter-spacing: -.1px; color: #d1d5db; white-space: nowrap; }
.value { padding-top: 1px; font-size: 48px; font-weight: 600; line-height: 63px; letter-spacing: 2.5px; }
.note { margin-top: 8px; font-size: 24px; font-weight: 300; line-height: 32px; color: #9ca3af; white-space: nowrap; position: relative; top: 1px; }
.note.loose { letter-spacing: .35px; }

.charts { display: grid; grid-template-columns: 1fr 1fr; gap: 64px; margin-top: 64px; }
.panel { padding: 48px; }
.charts .panel { height: 788px; }
h2 { height: 56px; padding-top: 1px; font-size: 40px; font-weight: 500; line-height: 56px; letter-spacing: -.55px; }
h2.costs { letter-spacing: -.35px; }
.chart { display: block; margin-top: 32px; overflow: hidden; }
.grid { fill: none; stroke: #374151; stroke-width: 2; stroke-dasharray: 6 6; }
.axis { fill: none; stroke: #666; stroke-width: 2; }
.line { fill: none; stroke: #10b981; stroke-width: 4; }
.tick { fill: #9ca3af; font-size: 32px; font-weight: 300; text-anchor: end; }
.ylab { letter-spacing: 1.4px; }
.jul { letter-spacing: -.9px; }
.aug { letter-spacing: -.25px; }
.legend { font-size: 32px; font-weight: 300; }
.legend.cost { letter-spacing: .6px; }
.summary { height: 400px; margin-top: 64px; }

.scroll { flex: none; width: 16px; background: #1a1a1a; }
.scroll i { display: block; height: 332px; border-radius: 8px; background: linear-gradient(#6d5cc4, #8b5cf6); }

/* Desktop and dock */
.desktop { position: relative; height: 114px; padding: 4px 64px 10px; }
.wallpaper { position: absolute; left: 0; top: -20px; z-index: -1; }
.dock {
  height: 100px;
  display: flex;
  align-items: flex-start;
  padding: 14px 0 0 14px;
  border: 2px solid #ffffff33;
  border-radius: 34px;
  background: linear-gradient(90deg, #565460, #56546b 10%, #565468 26%, #5d5786 32%, #6a5fc4 36%, #6960de 42%, #6860e4 75%, #6258c6 92%, #5b50ae);
}
.apps { display: flex; gap: 20.6px; }
.app { position: relative; width: 62px; height: 62px; }
.app > svg { display: block; width: 62px; height: 62px; overflow: visible; }
.app.on::after {
  content: "";
  position: absolute;
  left: 26px;
  top: 72px;
  width: 8px;
  height: 8px;
  border-radius: 50%;
  background: #080418;
}
.badge {
  position: absolute;
  right: -9px;
  top: -7px;
  min-width: 30px;
  height: 30px;
  padding: 0 3px;
  border-radius: 15px;
  background: #f53b35;
  font-size: 16px;
  font-weight: 400;
  line-height: 30px;
  letter-spacing: -.3px;
  text-align: center;
}
.dock-sep { width: 2px; height: 72px; margin: -2px 28px 0; background: #3a2f9c; }
.trash { margin: -8px 0 0; }
.cal-m { font-size: 14px; font-weight: 600; fill: #fff; text-anchor: middle; }
.cal-d { font-size: 38px; font-weight: 300; fill: #2a2a2c; text-anchor: middle; letter-spacing: -1.5px; }
.word-w { font-size: 17px; font-weight: 700; fill: #fff; text-anchor: middle; }
```
